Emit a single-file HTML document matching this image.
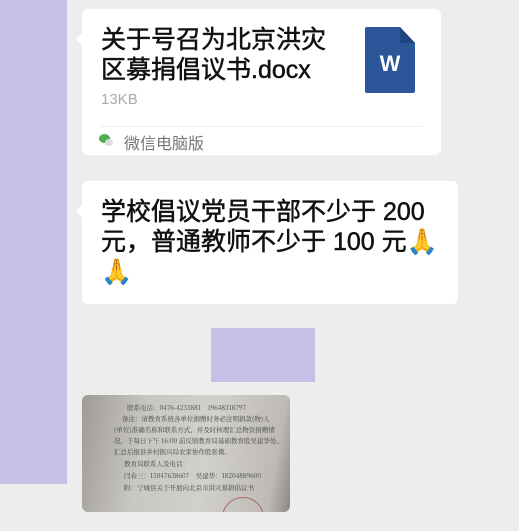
<!DOCTYPE html>
<html><head><meta charset="utf-8"><style>
body{margin:0;width:519px;height:531px;background:#ededed;position:relative;overflow:hidden;font-family:"Liberation Sans","Noto Sans CJK SC",sans-serif}
.strip{position:absolute;left:0;top:0;width:67px;height:484px;background:#c6bfe6}
.b{position:absolute;background:#fff;border-radius:6px}
.b:before{content:"";position:absolute;left:-6px;top:24px;border:6px solid transparent;border-left:0;border-right-color:#fff}
.t{position:absolute;font-size:25px;font-weight:normal;-webkit-text-stroke:0.5px #111;color:#111;line-height:30px;white-space:nowrap}
.paper{position:absolute;left:82px;top:395px;width:208px;height:117px;border-radius:6px;overflow:hidden;background:linear-gradient(100deg,#9e9b97,#c9c7c2 30%,#d2d0cb 60%,#bdbab5 90%,#8a8683);font-family:"Noto Serif CJK SC",serif;font-size:6.5px;color:#444}
.paper div{position:absolute;white-space:nowrap}
</style></head><body>
<div class="strip"></div>
<div class="b" style="left:82px;top:9px;width:359px;height:146px">
 <div class="t" style="left:19px;top:16px">关于号召为北京洪灾<br>区募捐倡议书.docx</div>
 <div style="position:absolute;left:19px;top:82px;font-size:15px;color:#aaa">13KB</div>
 <div style="position:absolute;left:283px;top:18px;width:50px;height:66px;background:#2b579a;border-radius:2px;clip-path:polygon(0 0,70% 0,100% 24%,100% 100%,0 100%)"></div>
 <div style="position:absolute;left:318px;top:18px;width:15px;height:16px;background:#1f4580;clip-path:polygon(0 0,100% 100%,0 100%)"></div>
 <div style="position:absolute;left:283px;top:42px;width:50px;text-align:center;color:#fff;font-size:22px;font-weight:bold">W</div>
 <div style="position:absolute;left:18px;right:18px;top:117px;height:1px;background:#eee"></div>
 <div style="position:absolute;left:17px;top:125px;width:11px;height:9px;background:#4caf50;border-radius:50%"></div>
 <div style="position:absolute;left:23px;top:130px;width:8px;height:7px;background:#ddd;border-radius:50%"></div>
 <div style="position:absolute;left:42px;top:121px;font-size:16px;color:#777">微信电脑版</div>
</div>
<div class="b" style="left:82px;top:181px;width:376px;height:123px">
 <div class="t" style="left:19px;top:16px;line-height:30px">学校倡议党员干部不少于 200<br>元，普通教师不少于 100 元🙏<br>🙏</div>
</div>
<div style="position:absolute;left:211px;top:328px;width:104px;height:54px;background:#c6bfe6"></div>
<div class="paper">
 <div style="left:45px;top:8px">联系电话：0476-4233881　19648318797</div>
 <div style="left:40px;top:19px">备注：请教育系统各单位捐赠时务必注明捐款(物)人</div>
 <div style="left:32px;top:30px">(单位)准确名称和联系方式，并及时核理汇总物资捐赠情</div>
 <div style="left:32px;top:41px">况，于每日下午 16:00 前反馈教育局基础教育股吴建华处。</div>
 <div style="left:32px;top:52px">汇总后报县乡村振兴局农家协作股张微。</div>
 <div style="left:42px;top:64px">教育局联系人及电话：</div>
 <div style="left:42px;top:76px">闫春三：15047638607　吴建华：18204889600</div>
 <div style="left:42px;top:88px">附：宁城县关于开展向北京市洪灾募捐倡议书</div>
 <div style="left:140px;top:102px;width:40px;height:40px;border:1px solid #a66;border-radius:50%"></div>
</div>
</body></html>
